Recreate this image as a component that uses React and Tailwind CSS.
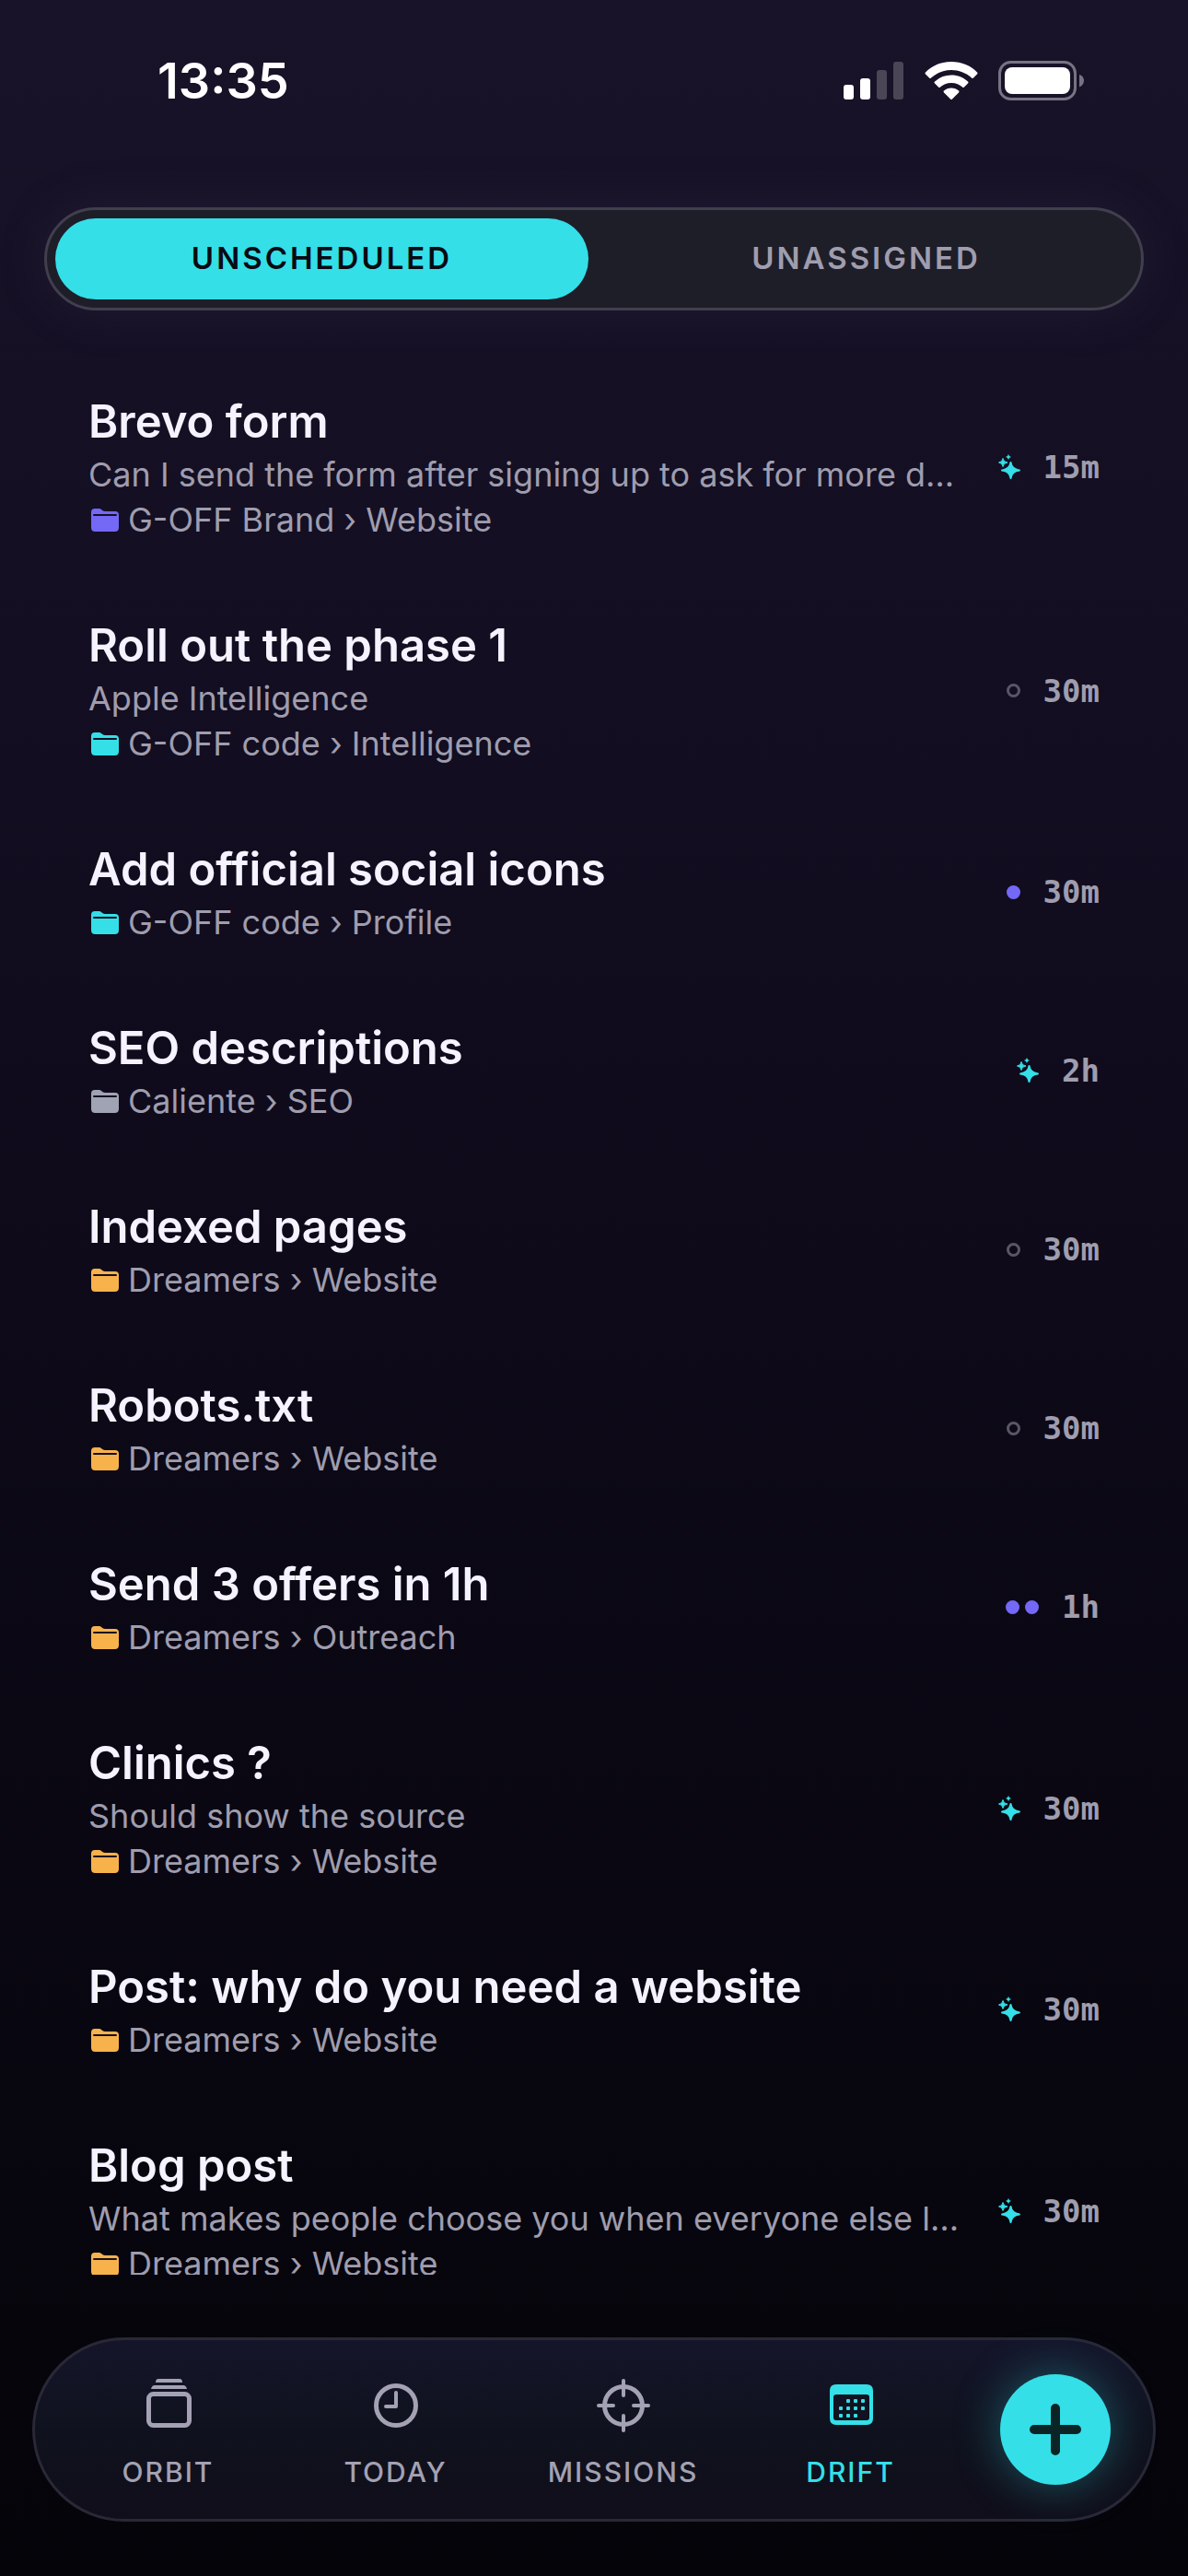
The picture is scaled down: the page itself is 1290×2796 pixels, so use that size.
import React, { useState } from "react";

const TASKS = [
  { title: "Brevo form", note: "Can I send the form after signing up to ask for more details", project: "G-OFF Brand", area: "Website", color: "#7468f6", effort: "ai", time: "15m" },
  { title: "Roll out the phase 1", note: "Apple Intelligence", project: "G-OFF code", area: "Intelligence", color: "#34dfe8", effort: "none", time: "30m" },
  { title: "Add official social icons", project: "G-OFF code", area: "Profile", color: "#34dfe8", effort: "one", time: "30m" },
  { title: "SEO descriptions", project: "Caliente", area: "SEO", color: "#a0a3b4", effort: "ai", time: "2h" },
  { title: "Indexed pages", project: "Dreamers", area: "Website", color: "#f8b24c", effort: "none", time: "30m" },
  { title: "Robots.txt", project: "Dreamers", area: "Website", color: "#f8b24c", effort: "none", time: "30m" },
  { title: "Send 3 offers in 1h", project: "Dreamers", area: "Outreach", color: "#f8b24c", effort: "two", time: "1h" },
  { title: "Clinics ?", note: "Should show the source", project: "Dreamers", area: "Website", color: "#f8b24c", effort: "ai", time: "30m" },
  { title: "Post: why do you need a website", project: "Dreamers", area: "Website", color: "#f8b24c", effort: "ai", time: "30m" },
  { title: "Blog post", note: "What makes people choose you when everyone else looks the same", project: "Dreamers", area: "Website", color: "#f8b24c", effort: "ai", time: "30m" },
];

const StatusBar = () => (
  <div className="flex items-center justify-between pl-[171px] pr-[112px] pt-[58px]">
    <span className="text-[54px] leading-[60px] font-semibold text-white">13:35</span>
    <div className="flex items-center gap-[22px]">
      <svg width="66" height="42" viewBox="0 0 66 42" fill="#fff" aria-hidden="true">
        <rect x="0" y="25" width="11" height="16" rx="3" />
        <rect x="18" y="18" width="11" height="23" rx="3" />
        <rect x="36" y="9" width="11" height="32" rx="3" opacity="0.22" />
        <rect x="54" y="0" width="11" height="41" rx="3" opacity="0.22" />
      </svg>
      <svg width="58" height="42" viewBox="0 0 58 42" fill="#fff" aria-hidden="true">
        <path d="M29 0C40 0 50 4 57 11.500Q58 12.500 57 13.500L53 17.500Q52 18.500 51 17.500C45 12 37 9 29 9S13 12 7 17.500Q6 18.500 5 17.500L1 13.500Q0 12.500 1 11.500C8 4 18 0 29 0Z" />
        <path d="M29 14.500C36 14.500 42 17 47 21.500Q48 22.500 47 23.500L43 27.500Q42 28.500 41 27.500C38 25 34 23 29 23S20 25 17 27.500Q16 28.500 15 27.500L11 23.500Q10 22.500 11 21.500C16 17 22 14.500 29 14.500Z" />
        <path d="M29 28.500C32 28.500 35 29.500 37 31.500Q38 32.500 37 33.500L30 40.500Q29 41.500 28 40.500L21 33.500Q20 32.500 21 31.500C23 29.500 26 28.500 29 28.500Z" />
      </svg>
      <svg width="94" height="44" viewBox="0 0 94 44" aria-hidden="true">
        <rect x="1.500" y="1.500" width="82" height="40" rx="12" fill="none" stroke="#777383" strokeWidth="3" />
        <rect x="7" y="7" width="71" height="29" rx="8" fill="#fff" />
        <path d="M88 15C91.500 16 93 19 93 21.500S91.500 27 88 28.500Z" fill="#777383" />
      </svg>
    </div>
  </div>
);

const FolderIcon = ({ color }) => (
  <svg width="30" height="26" viewBox="0 0 30 26" className="shrink-0" aria-hidden="true">
    <path
      d="M0 4Q0 0 4 0H9C11 0 12 3 15 3H26Q30 3 30 7V20.500Q30 25 25.500 25H4.500Q0 25 0 20.500Z"
      fill={color}
    />
    <path d="M3 7H27" stroke="#14101f" strokeWidth="2" strokeLinecap="round" />
  </svg>
);

const Sparkles = () => (
  <svg width="24" height="28" viewBox="0 0 24 28" fill="#34dfe8" aria-hidden="true">
    <path d="M13.500 9Q14.500 16.500 23 17.500Q14.500 18.500 13.500 26Q12.500 18.500 4 17.500Q12.500 16.500 13.500 9Z" stroke="#34dfe8" strokeWidth="2" strokeLinejoin="round" />
    <path d="M5 4.500Q5.500 8.500 10 9Q5.500 9.500 5 13.500Q4.500 9.500 0.500 9Q4.500 8.500 5 4.500Z" stroke="#34dfe8" strokeLinejoin="round" />
    <path d="M11 0Q11.500 2.500 14 3Q11.500 3.500 11 6Q10.500 3.500 8 3Q10.500 2.500 11 0Z" />
  </svg>
);

const Effort = ({ level }) => {
  if (level === "ai") return <Sparkles />;
  if (level === "none") return <span className="size-[15px] rounded-full border-3 border-[#5a5666]" />;
  return (
    <span className="flex gap-[6px]">
      <span className="size-[15px] rounded-full bg-[#7468f6]" />
      {level === "two" && <span className="size-[15px] rounded-full bg-[#7468f6]" />}
    </span>
  );
};

const TaskRow = ({ task }) => (
  <li className="flex items-center py-[42px]">
    <div className="min-w-0 flex-1 space-y-[6px]">
      <h2 className="truncate text-[49px] leading-[61px] font-semibold text-[#f5f3ff]">{task.title}</h2>
      {task.note && <p className="truncate text-[36px] leading-[43px] text-[#9f9dae]">{task.note}</p>}
      <div className="flex items-center gap-[10px] pl-[3px] text-[36px] leading-[43px] text-[#9f9dae]">
        <FolderIcon color={task.color} />
        <span>{task.project} › {task.area}</span>
      </div>
    </div>
    <div className="ml-9 flex shrink-0 items-center gap-[25px]">
      <Effort level={task.effort} />
      <span className="font-['DejaVu_Sans_Mono',monospace] text-[34px] leading-[40px] font-bold text-[#9f9dae]">
        {task.time}
      </span>
    </div>
  </li>
);

const OrbitIcon = () => (
  <svg width="60" height="60" viewBox="0 0 60 60" fill="none" stroke="currentColor" strokeWidth="5" aria-hidden="true">
    <rect x="8.500" y="17.500" width="44" height="34" rx="5" />
    <path d="M11 12Q12 8 15 8H46Q49 8 50 12ZM16 5Q16 1 19 1H42Q45 1 45 5Z" fill="currentColor" stroke="none" />
  </svg>
);

const TodayIcon = () => (
  <svg width="60" height="60" viewBox="0 0 60 60" fill="none" stroke="currentColor" strokeWidth="5" strokeLinecap="round" strokeLinejoin="round" aria-hidden="true">
    <circle cx="30" cy="30" r="21.500" />
    <path d="M30 16V31H19" strokeWidth="4" />
  </svg>
);

const MissionsIcon = () => (
  <svg width="60" height="60" viewBox="0 0 60 60" fill="none" stroke="currentColor" strokeWidth="4" strokeLinecap="round" aria-hidden="true">
    <circle cx="30" cy="30" r="20.500" strokeWidth="5" />
    <path d="M30 3V19M30 41V57M3 30H19M41 30H57" />
  </svg>
);

const DOTS = [[1, 0], [2, 0], [3, 0], [0, 1], [1, 1], [2, 1], [3, 1], [0, 2], [1, 2], [2, 2]];

const DriftIcon = () => (
  <svg width="60" height="60" viewBox="0 0 60 60" fill="currentColor" aria-hidden="true">
    <path fillRule="evenodd" d="M14 7H47Q54 7 54 14V44Q54 51 47 51H14Q7 51 7 44V14Q7 7 14 7ZM14 18Q11 18 11 21V43Q11 46 14 46H47Q50 46 50 43V21Q50 18 47 18Z" />
    {DOTS.map(([col, row]) => (
      <rect key={`${col}-${row}`} x={17 + col * 8} y={23 + row * 8} width="4" height="4" rx="1" />
    ))}
  </svg>
);

const NAV = [
  { id: "orbit", label: "ORBIT", Icon: OrbitIcon },
  { id: "today", label: "TODAY", Icon: TodayIcon },
  { id: "missions", label: "MISSIONS", Icon: MissionsIcon },
  { id: "drift", label: "DRIFT", Icon: DriftIcon },
];

const App = () => {
  const [filter, setFilter] = useState("UNSCHEDULED");
  const [page, setPage] = useState("drift");

  return (
    <div className="flex h-screen flex-col bg-linear-to-b from-[#181328] via-[#120d20] via-30% to-[#050409] font-[Inter,sans-serif]">
      <StatusBar />

      <div className="mx-[48px] mt-[107px] flex shrink-0 gap-[12px] rounded-full border-3 border-[#413e4e] bg-[#1e1e29] p-[9px] shadow-[0_0_60px_rgba(120,100,160,0.12)]">
        {["UNSCHEDULED", "UNASSIGNED"].map((name) => (
          <button
            key={name}
            onClick={() => setFilter(name)}
            className={`h-[88px] flex-1 rounded-full text-[33px] font-semibold tracking-[3px] ${
              filter === name ? "bg-[#34dfe8] text-[#0a0a12]" : "text-[#9f9dae]"
            }`}
          >
            {name}
          </button>
        ))}
      </div>

      <ul className="mt-[48px] min-h-0 flex-1 overflow-hidden px-[96px]">
        {TASKS.map((task) => (
          <TaskRow key={task.title} task={task} />
        ))}
      </ul>

      <nav className="mx-[35px] mt-[68px] mb-[59px] flex h-[200px] shrink-0 items-center rounded-[100px] border-3 border-[#292837] bg-linear-to-b from-[#15152a] via-[#0f121e] to-[#100e1a] pl-[21px] pr-[46px]">
        {NAV.map(({ id, label, Icon }) => (
          <button
            key={id}
            onClick={() => setPage(id)}
            className={`flex flex-1 basis-0 flex-col items-center gap-[24px] pt-2 text-[30px] leading-[36px] font-medium tracking-[2px] ${
              page === id ? "text-[#34dfe8]" : "text-[#a3a1b3]"
            }`}
          >
            <Icon />
            {label}
          </button>
        ))}
        <button
          aria-label="Add task"
          className="ml-[39px] flex size-[120px] shrink-0 items-center justify-center rounded-full bg-[#34dfe8] shadow-[0_0_50px_rgba(52,223,232,0.35)]"
        >
          <svg width="60" height="60" viewBox="0 0 60 60" stroke="#0b2526" strokeWidth="10" strokeLinecap="round" aria-hidden="true">
            <path d="M30 7V53M7 30H53" />
          </svg>
        </button>
      </nav>
    </div>
  );
};

export default App;
